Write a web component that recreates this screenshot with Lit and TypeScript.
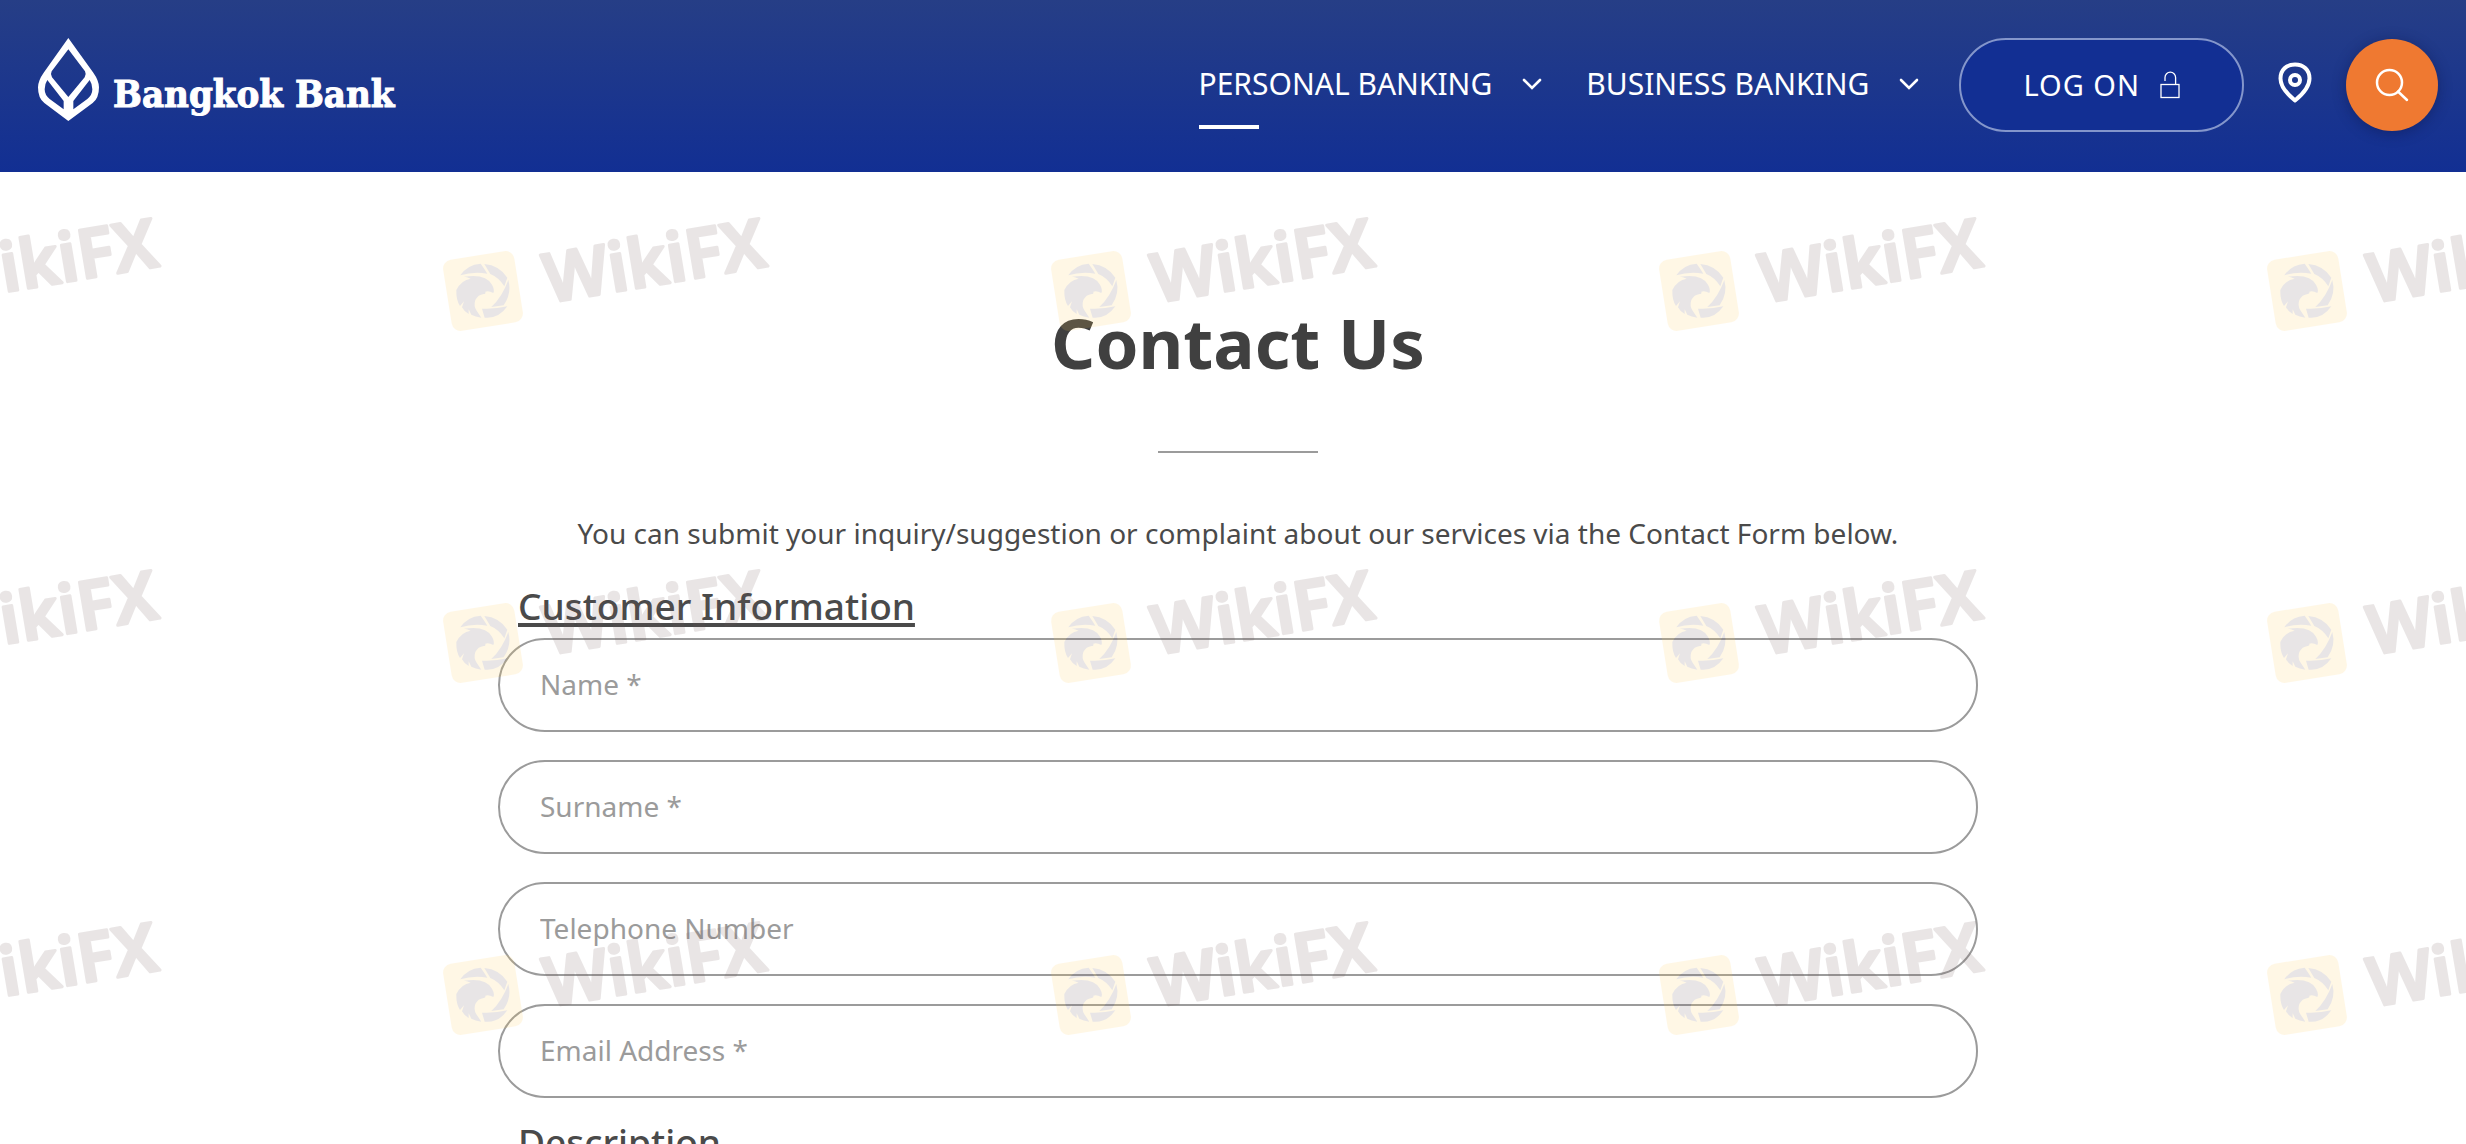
import { LitElement, html, css, svg } from "lit";
import { customElement, property } from "lit/decorators.js";

const SANS = css`"Noto Sans", "Open Sans", sans-serif`;

@customElement("bank-logo")
class BankLogo extends LitElement {
  static styles = css`
    :host { display: block; }
    .logo { display: flex; align-items: flex-end; gap: 14px; color: #fff; text-decoration: none; }
    .mark { display: block; width: 61px; height: 83px; }
    .name {
      font: 700 38px/54px "DejaVu Serif Condensed", "DejaVu Serif", serif;
      -webkit-text-stroke: 1px #fff; white-space: nowrap;
    }
  `;
  render() {
    return html`
      <a class="logo" href="#">
        <svg class="mark" viewBox="24 24 183 249" aria-hidden="true">
          <path fill="#fff" fill-rule="evenodd"
            d="M115 24 L190 128 Q207 152 207 172 Q207 205 188 219 L115 273 L43 219 Q24 205 24 172 Q24 152 41 128 Z
               M115 58 L65 124 Q60 133 66 142 L115 201 L164 142 Q170 133 165 124 Z
               M52 150 L101 213 V238 L59 207 Q44 195 44 178 Q44 162 52 150 Z
               M179 150 L130 213 V238 L172 207 Q187 195 187 178 Q187 162 179 150 Z" />
        </svg>
        <span class="name">Bangkok Bank</span>
      </a>
    `;
  }
}

@customElement("site-header")
class SiteHeader extends LitElement {
  static styles = css`
    :host { display: block; }
    .bar {
      display: flex; align-items: flex-start; justify-content: space-between;
      padding: 38px 28px 40px 38px;
      background: linear-gradient(#263e86, #122f93);
      font-family: ${SANS};
    }
    .right { display: flex; align-items: center; gap: 34px; }
    .nav { display: flex; align-items: center; gap: 44px; padding-bottom: 2px; }
    .link {
      position: relative; display: flex; align-items: center; gap: 30px;
      color: #fff; text-decoration: none; font-size: 30px; line-height: 40px; white-space: nowrap;
    }
    .current::after {
      content: ""; position: absolute; left: 0; bottom: -25px;
      width: 60px; height: 4px; background: #fff;
    }
    .chevron { width: 20px; height: 12px; }
    .logon {
      display: flex; align-items: center; gap: 20px; box-sizing: border-box; height: 94px;
      margin-left: 6px; padding: 0 62px; border: 2px solid #8496cb; border-radius: 47px;
      background: #122f93; color: #fff; cursor: pointer;
      font: 400 29px/40px ${SANS}; letter-spacing: 1px; white-space: nowrap;
    }
    .lock { width: 20px; height: 28px; }
    .pin { display: block; padding-bottom: 4px; }
    .pin svg { display: block; width: 34px; height: 42px; }
    .search {
      display: grid; place-items: center; width: 92px; height: 92px; padding: 0; border: 0;
      border-radius: 50%; background: #ef7931; cursor: pointer;
      box-shadow: 0 2px 14px rgba(10, 20, 70, 0.45);
    }
    .search svg { width: 34px; height: 34px; }
  `;
  private chevron() {
    return html`<svg class="chevron" viewBox="0 0 20 12" aria-hidden="true">
      <path d="M2 2 L10 10 L18 2" fill="none" stroke="#fff" stroke-width="2.6" stroke-linecap="round" />
    </svg>`;
  }
  render() {
    return html`
      <header class="bar">
        <bank-logo></bank-logo>
        <div class="right">
          <nav class="nav">
            <a class="link current" href="#personal">PERSONAL BANKING ${this.chevron()}</a>
            <a class="link" href="#business">BUSINESS BANKING ${this.chevron()}</a>
          </nav>
          <button class="logon" type="button">
            LOG ON
            <svg class="lock" viewBox="0 0 20 28" aria-hidden="true">
              <g fill="none" stroke="#fff" stroke-width="1.3">
                <path d="M5 10 V6.500 A5.300 5.300 0 0 1 15.600 6.500 V13.500" />
                <rect x="1" y="13.500" width="18" height="13" />
              </g>
            </svg>
          </button>
          <a class="pin" href="#locations" aria-label="Locate us">
            <svg viewBox="0 0 34 42" aria-hidden="true">
              <g fill="none" stroke="#fff" stroke-width="4">
                <path d="M17 38.500 C9 32 2.500 24.500 2.500 16.500 C2.500 8 8.500 2.500 17 2.500 C25.500 2.500 31.500 8 31.500 16.500 C31.500 24.500 25 32 17 38.500 Z" stroke-linejoin="round" />
                <circle cx="17" cy="18" r="5" />
              </g>
            </svg>
          </a>
          <button class="search" type="button" aria-label="Search">
            <svg viewBox="0 0 34 34" aria-hidden="true">
              <g fill="none" stroke="#fff" stroke-width="2.5" stroke-linecap="round">
                <circle cx="14.500" cy="14.500" r="12.500" />
                <path d="M23 23.500 L32 32" />
              </g>
            </svg>
          </button>
        </div>
      </header>
    `;
  }
}

@customElement("text-field")
class TextField extends LitElement {
  @property() label = "";
  @property() type = "text";
  static styles = css`
    :host { display: block; }
    .label { position: absolute; width: 1px; height: 1px; overflow: hidden; clip-path: inset(50%); }
    .box {
      display: block; box-sizing: border-box; width: 100%; height: 94px; padding: 0 40px 2px;
      border: 2px solid #9b9b9b; border-radius: 47px; background: #fff; outline: none;
      color: #4a4a4a; font: 400 28px/40px ${SANS};
    }
    .box::placeholder { color: #9b9b9b; opacity: 1; }
  `;
  render() {
    return html`
      <label class="label" for="field">${this.label}</label>
      <input class="box" id="field" type=${this.type} placeholder=${this.label} />
    `;
  }
}

@customElement("brand-watermark")
class BrandWatermark extends LitElement {
  static styles = css`
    :host { display: block; overflow: hidden; pointer-events: none; }
    .sheet {
      display: grid; grid-template-columns: repeat(5, 608px); grid-auto-rows: 352px;
      margin: 209px 0 0 -172px;
    }
    .tile { display: block; width: 350px; height: 140px; opacity: 0.15; }
    .word { font: 600 68px ${SANS}; }
  `;
  private tile() {
    return svg`
      <svg class="tile" viewBox="0 0 350 140">
        <rect x="11" y="46" width="72" height="72" rx="9" fill="#ffcf58" transform="rotate(-9 47 82)" />
        <g transform="translate(0 35) scale(0.3333)" fill="#6c5860">
          <path d="M73 94 Q94 62 134 59 Q145 74 154 89 Q112 82 73 94 Z" />
          <path d="M145 60 Q190 64 214 101 L205 127 Q188 100 163 90 Z" />
          <path d="M217 108 Q228 148 203 184 L166 189 Q198 160 217 108 Z" />
          <path d="M138 194 Q178 196 214 187 Q188 225 146 221 Z" />
          <path d="M61 138 Q76 108 104 104 Q92 98 84 98 Q150 88 168 122 Q177 138 172 147 Q158 139 148 143 Q150 150 143 150 Q126 152 118 168 Q112 188 122 200 L136 221 Q118 218 106 212 L98 196 L98 210 Q84 202 78 190 L84 172 L72 186 Q60 168 61 138 Z" />
        </g>
        <text class="word" x="112" y="94" fill="#705858" stroke="#705858" stroke-width="3"
          stroke-linejoin="round" transform="rotate(-9.500 112 94)">WikiFX</text>
      </svg>
    `;
  }
  render() {
    return html`<div class="sheet" aria-hidden="true">${Array.from({ length: 15 }, () => this.tile())}</div>`;
  }
}

@customElement("app-root")
class AppRoot extends LitElement {
  static styles = css`
    :host {
      display: block; position: relative; height: 100vh; overflow: hidden;
      background: #fff; color: #4a4a4a; font-family: ${SANS};
    }
    .page { display: flex; flex-direction: column; align-items: center; padding: 122px 0 0 10px; }
    .title { margin: 0; color: #404040; font-size: 69px; line-height: 96px; font-weight: 700; }
    .rule { width: 160px; height: 2px; margin: 61px 0 60px; border: 0; background: #9b9b9b; }
    .intro { margin: 0; font-size: 28px; line-height: 40px; }
    .form { display: flex; flex-direction: column; width: 100%; max-width: 1480px; margin-top: 27px; }
    .section { margin: 0 20px 6px; font-size: 37px; line-height: 52px; font-weight: 500; }
    .underlined { text-decoration: underline; text-decoration-thickness: 4px; text-underline-offset: 3px; }
    .fields { display: flex; flex-direction: column; gap: 28px; margin-bottom: 18px; }
    .overlay { position: absolute; inset: 0; }
  `;
  render() {
    return html`
      <site-header></site-header>
      <main class="page">
        <h1 class="title">Contact Us</h1>
        <hr class="rule" />
        <p class="intro">You can submit your inquiry/suggestion or complaint about our services via the Contact Form below.</p>
        <form class="form">
          <h2 class="section"><span class="underlined">Customer Information</span></h2>
          <div class="fields">
            <text-field label="Name *"></text-field>
            <text-field label="Surname *"></text-field>
            <text-field label="Telephone Number" type="tel"></text-field>
            <text-field label="Email Address *" type="email"></text-field>
          </div>
          <h2 class="section">Description</h2>
        </form>
      </main>
      <brand-watermark class="overlay"></brand-watermark>
    `;
  }
}
